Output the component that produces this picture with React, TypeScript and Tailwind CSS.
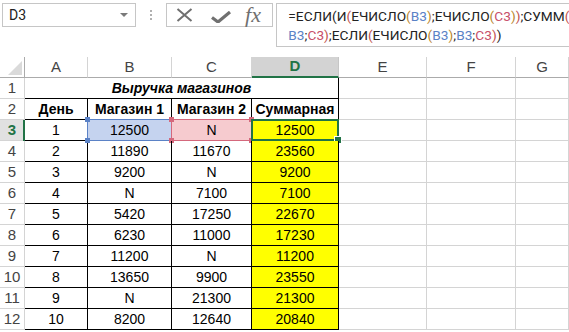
import React from "react";

const COLS = ["A", "B", "C", "D", "E", "F", "G"];

const data: string[][] = [
  ["1", "12500", "N", "12500"],
  ["2", "11890", "11670", "23560"],
  ["3", "9200", "N", "9200"],
  ["4", "N", "7100", "7100"],
  ["5", "5420", "17250", "22670"],
  ["6", "6230", "11000", "17230"],
  ["7", "11200", "N", "11200"],
  ["8", "13650", "9900", "23550"],
  ["9", "N", "21300", "21300"],
  ["10", "8200", "12640", "20840"],
];

const L2 = "text-[#c0504d]";
const L3 = "text-[#b8862b]";
const BL = "text-[#5b82c6]";
const RD = "text-[#c8506a]";

function Corner({ cls, color }: { cls: string; color: string }) {
  return <div className={`absolute w-[5px] h-[5px] ${color} ${cls}`} />;
}

function RowHeader({ n, active }: { n: number; active?: boolean }) {
  return (
    <div
      className={
        active
          ? "relative flex items-center justify-center border-b border-r border-[#d4d4d4] bg-[#e1e1e1] text-[#217346] font-bold text-[15px] pt-[1px]"
          : "flex items-center justify-center border-b border-r border-[#d4d4d4] text-[#444] text-[15px] pt-[1px]"
      }
    >
      {n}
      {active && <div className="absolute right-[-1px] top-0 bottom-[-1px] w-[2px] bg-[#217346]" />}
    </div>
  );
}

function Empty() {
  return <div className="border-b border-r border-[#d4d4d4]" />;
}

export default function App() {
  return (
    <div
      className="relative w-[569px] h-[332px] overflow-hidden bg-white text-black"
      style={{ fontFamily: '"Liberation Sans", Arial, sans-serif' }}
    >
      {/* Toolbar */}
      <div className="flex items-start h-[57px] pt-[3px]">
        <div className="ml-[2px] w-[137px] h-[24px] border border-[#c6c6c6] flex items-center justify-between pl-[6px] pr-[7px]">
          <span className="text-[14px] text-[#222]" style={{ fontFamily: "Roboto, sans-serif" }}>D3</span>
          <svg width="8" height="4" viewBox="0 0 8 4">
            <path d="M0 0 L8 0 L4 4 Z" fill="#7a7a7a" />
          </svg>
        </div>
        <div className="w-[31px] h-[24px] flex flex-col items-center justify-center gap-[2px]">
          <div className="w-[2px] h-[2px] bg-[#b0b0b0]" />
          <div className="w-[2px] h-[2px] bg-[#b0b0b0]" />
          <div className="w-[2px] h-[2px] bg-[#b0b0b0]" />
        </div>
        <div className="w-[110px] h-[24px] border border-[#c6c6c6] flex items-center">
          <svg className="ml-[9px]" width="17" height="14" viewBox="0 0 17 14">
            <path d="M1.5 1 L15.5 13 M15.5 1 L1.5 13" stroke="#707070" strokeWidth="2" fill="none" />
          </svg>
          <svg className="ml-[18px] mt-[3px]" width="20" height="12" viewBox="0 0 20 12">
            <path d="M1 6.5 L7 11 L19 1" stroke="#707070" strokeWidth="3.2" fill="none" strokeLinejoin="miter" />
          </svg>
          <span
            className="ml-[14px] italic text-[22px] text-[#707070] leading-none"
            style={{ fontFamily: '"Liberation Serif", "Times New Roman", serif' }}
          >
            fx
          </span>
        </div>
        <div
          className="ml-[3px] w-[300px] h-[44px] border-l border-t border-b border-[#c6c6c6] pl-[11px] pt-[3px] text-[13.7px] leading-[19px] whitespace-nowrap overflow-hidden text-[#222]"
          style={{ fontFamily: "Roboto, sans-serif" }}
        >
          <div>
            =ЕСЛИ(И<span className={L2}>(</span>ЕЧИСЛО<span className={L3}>(</span>
            <span className={BL}>B3</span>
            <span className={L3}>)</span>;ЕЧИСЛО<span className={L3}>(</span>
            <span className={RD}>C3</span>
            <span className={L3}>)</span>
            <span className={L2}>)</span>;СУММ<span className={L2}>(</span>
          </div>
          <div>
            <span className={BL}>B3</span>;<span className={RD}>C3</span>
            <span className={L2}>)</span>;ЕСЛИ<span className={L2}>(</span>ЕЧИСЛО<span className={L3}>(</span>
            <span className={BL}>B3</span>
            <span className={L3}>)</span>;<span className={BL}>B3</span>;<span className={RD}>C3</span>
            <span className={L2}>)</span>)
          </div>
        </div>
      </div>

      {/* Grid */}
      <div className="grid grid-cols-[25px_63px_84px_80px_87px_88px_89px_1fr] auto-rows-[21px] text-[14px]">
        {/* header row */}
        <div className="relative border-b border-r border-[#ababab]">
          <svg className="absolute right-[2px] bottom-[2px]" width="14" height="14" viewBox="0 0 14 14">
            <path d="M14 0 L14 14 L0 14 Z" fill="#dadada" />
          </svg>
        </div>
        {COLS.map((c) =>
          c === "D" ? (
            <div
              key={c}
              className="flex items-center justify-center bg-[#d3d3d3] border-b-2 border-b-[#217346] border-r border-r-[#c6c6c6] text-[#217346] font-bold text-[15px]"
            >
              {c}
            </div>
          ) : (
            <div
              key={c}
              className="flex items-center justify-center border-b border-b-[#ababab] border-r border-r-[#d4d4d4] text-[#444] text-[15px]"
            >
              {c}
            </div>
          )
        )}

        {/* row 1 */}
        <RowHeader n={1} />
        <div className="col-span-4 flex items-center justify-center border-b border-r border-black font-bold italic pt-[1px]">
          Выручка магазинов
        </div>
        <Empty />
        <Empty />
        <Empty />

        {/* row 2 */}
        <RowHeader n={2} />
        {["День", "Магазин 1", "Магазин 2", "Суммарная"].map((h) => (
          <div key={h} className="flex items-center justify-center border-b border-r border-black font-bold pt-[1px]">
            {h}
          </div>
        ))}
        <Empty />
        <Empty />
        <Empty />

        {data.map((row, i) => {
          const r = i + 3;
          const sel = r === 3;
          return (
            <React.Fragment key={r}>
              <RowHeader n={r} active={sel} />
              <div className="flex items-center justify-center border-b border-r border-black pt-[1px]">{row[0]}</div>
              <div
                className={`relative flex items-center justify-center border-b border-r border-black pt-[1px] ${
                  sel ? "bg-[#c5d3ef]" : ""
                }`}
              >
                {row[1]}
                {sel && (
                  <div className="absolute -inset-[1px] border border-[#5b82c6]">
                    <Corner cls="-left-[3px] -top-[3px]" color="bg-[#5b82c6]" />
                    <Corner cls="-right-[3px] -top-[3px]" color="bg-[#5b82c6]" />
                    <Corner cls="-left-[3px] -bottom-[3px]" color="bg-[#5b82c6]" />
                    <Corner cls="-right-[3px] -bottom-[3px]" color="bg-[#5b82c6]" />
                  </div>
                )}
              </div>
              <div
                className={`relative flex items-center justify-center border-b border-r border-black pt-[1px] ${
                  sel ? "bg-[#f6cbcf]" : ""
                }`}
              >
                {row[2]}
                {sel && (
                  <div className="absolute -inset-[1px] border border-[#d4687c]">
                    <Corner cls="-left-[3px] -top-[3px]" color="bg-[#d4687c]" />
                    <Corner cls="-right-[3px] -top-[3px]" color="bg-[#d4687c]" />
                    <Corner cls="-left-[3px] -bottom-[3px]" color="bg-[#d4687c]" />
                    <Corner cls="-right-[3px] -bottom-[3px]" color="bg-[#d4687c]" />
                  </div>
                )}
              </div>
              <div className="relative flex items-center justify-center border-b border-r border-black bg-[#ffff00] pt-[1px]">
                {row[3]}
                {sel && (
                  <div className="absolute -inset-[1px] border-2 border-[#217346]">
                    <div className="absolute -right-[4px] -bottom-[4px] w-[6px] h-[6px] bg-[#217346] outline outline-1 outline-white" />
                  </div>
                )}
              </div>
              <Empty />
              <Empty />
              <Empty />
            </React.Fragment>
          );
        })}
      </div>
    </div>
  );
}
